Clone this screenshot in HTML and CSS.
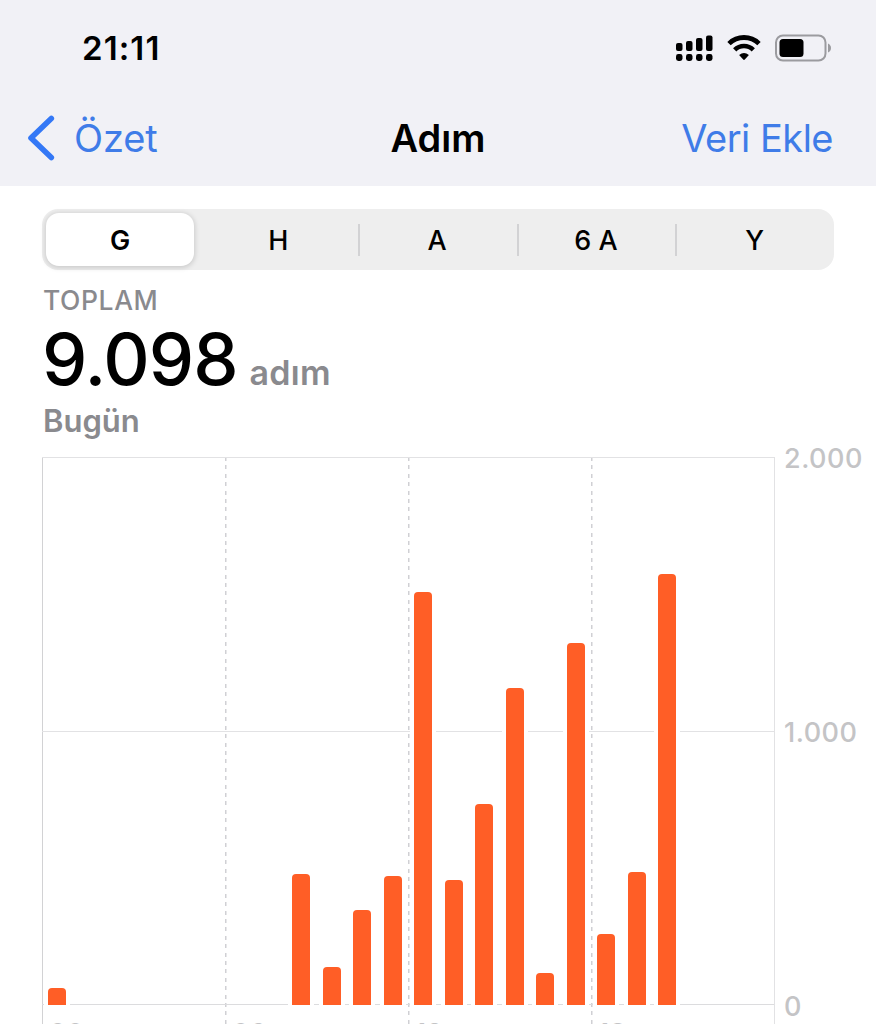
FILE: index.html
```html
<!DOCTYPE html>
<html lang="tr">
<head>
  <meta charset="UTF-8">
  <meta name="viewport" content="width=device-width, initial-scale=1.0">
  <title>Adım</title>
  <link rel="stylesheet" href="styles.css">
</head>
<body>
  <header>
    <div class="status-bar">
      <span class="clock">21:11</span>
      <div class="status-icons">
        <svg class="signal" width="38" height="28" viewBox="0 0 38 28">
          <rect x="1" y="9" width="6.5" height="8" rx="2"/>
          <rect x="11" y="7" width="6.5" height="10" rx="2"/>
          <rect x="21" y="4" width="6.5" height="13" rx="2"/>
          <rect x="31" y="1.5" width="6.5" height="15.5" rx="2"/>
          <rect x="1" y="20" width="6.5" height="7" rx="2.4"/>
          <rect x="11" y="20" width="6.5" height="7" rx="2.4"/>
          <rect x="21" y="20" width="6.5" height="7" rx="2.4"/>
          <rect x="31" y="20" width="6.5" height="7" rx="2.4"/>
        </svg>
        <svg class="wifi" width="34" height="26" viewBox="0 0 34 26">
          <path d="M2 8.6 A 21.5 21.5 0 0 1 32 8.6" fill="none" stroke="#000" stroke-width="4.8"/>
          <path d="M7.7 14.8 A 13.2 13.2 0 0 1 26.3 14.8" fill="none" stroke="#000" stroke-width="4.6"/>
          <path d="M12.1 20.1 Q17 16 21.9 20.1 L17.8 24.6 Q17 25.3 16.2 24.6 Z"/>
        </svg>
        <svg class="battery" width="57" height="28" viewBox="0 0 57 28">
          <rect x="1" y="1.5" width="49.5" height="25" rx="7" fill="none" stroke="#9b9b9f" stroke-width="2"/>
          <rect x="4.5" y="5" width="24" height="18" rx="3.5"/>
          <path d="M53 9.5 Q56 11 56 14 Q56 17 53 18.5 Z" fill="#9b9b9f"/>
        </svg>
      </div>
    </div>
    <nav>
      <a class="back">
        <svg width="28" height="46" viewBox="0 0 28 46">
          <path d="M24.3 3.5 L4 23 L24.3 42.5" fill="none" stroke="#3478f6" stroke-width="5.6" stroke-linecap="round" stroke-linejoin="round"/>
        </svg>
        <span>Özet</span>
      </a>
      <h1>Adım</h1>
      <a class="add">Veri Ekle</a>
    </nav>
  </header>

  <main>
    <div class="tabs">
      <div class="tab active">G</div>
      <div class="tab">H</div>
      <div class="tab line">A</div>
      <div class="tab line">6 A</div>
      <div class="tab line">Y</div>
    </div>

    <div class="summary">
      <div class="label">TOPLAM</div>
      <div class="total"><span class="value">9.098</span><span class="unit">adım</span></div>
      <div class="date">Bugün</div>
    </div>

    <div class="chart">
      <div class="plot" id="plot"></div>
      <div class="y-axis">
        <span>2.000</span>
        <span>1.000</span>
        <span>0</span>
      </div>
    </div>
  </main>

  <script>
    // steps for each hour of the day
    const steps = [
      62, 0, 0, 0, 0, 0,
      0, 0, 479, 139, 345, 471,
      1507, 457, 735, 1157, 117, 1320,
      260, 485, 1573, 0, 0, 0
    ];
    const max = 2000;
    const plot = document.getElementById('plot');

    for (let q = 0; q < 4; q++) {
      const quarter = document.createElement('div');
      quarter.className = 'quarter';
      const bars = steps.slice(q * 6, q * 6 + 6).map(n =>
        `<div class="hour">${n ? `<div class="bar" style="height:${n / max * 100}%"></div>` : ''}</div>`
      ).join('');
      quarter.innerHTML = `
        <div class="bars">${bars}</div>
        <div class="time">${String(q * 6).padStart(2, '0')}</div>
      `;
      plot.appendChild(quarter);
    }
  </script>
</body>
</html>
```

FILE: styles.css
```css
* {
  box-sizing: border-box;
}
body {
  font-family: Inter, "Liberation Sans", sans-serif;
  background: #fff;
  color: #000;
  margin: 0;
  height: 1024px;
  overflow: hidden;
}
header {
  background: #f1f1f6;
  height: 186px;
}
.status-bar {
  display: flex;
  justify-content: space-between;
  align-items: center;
  height: 95px;
  padding: 0 44px 0 82px;
}
.clock {
  font-size: 33px;
  font-weight: 600;
  letter-spacing: 1.1px;
}
.status-icons {
  display: flex;
  align-items: center;
  gap: 14px;
}
nav {
  display: grid;
  grid-template-columns: 1fr auto 1fr;
  align-items: center;
  height: 86px;
  padding: 0 43px 0 27px;
}
nav a {
  color: #3f7ce8;
  font-size: 38px;
  letter-spacing: -0.1px;
}
.back {
  display: flex;
  align-items: center;
  gap: 19px;
}
nav .add {
  text-align: right;
  letter-spacing: -0.5px;
}
h1 {
  font-size: 38px;
  font-weight: 600;
  margin: 0 -8px 0 8px;
}
main {
  padding: 23px 0 0 42px;
}
.tabs {
  display: flex;
  width: 792px;
  height: 61px;
  padding: 4px 0;
  border-radius: 16px;
  background: #eee;
}
.tab {
  flex: 1;
  display: flex;
  align-items: center;
  justify-content: center;
  font-size: 27px;
  font-weight: 500;
  padding-top: 2px;
}
.tab.active {
  flex: none;
  width: 148px;
  margin: 0 5px 0 4px;
  border-radius: 13px;
  background: #fff;
  font-weight: 600;
  box-shadow: 0 1px 5px 1px rgba(0,0,0,0.15);
}
.tab.line {
  background: linear-gradient(#d2d2d4, #d2d2d4) left center / 2px 32px no-repeat;
}
.summary {
  color: #8a8a8e;
  font-weight: 600;
  height: 187px;
  padding: 14px 0 0 1px;
}
.label {
  font-size: 26.5px;
  line-height: 32px;
  font-weight: 500;
  letter-spacing: 0.6px;
}
.total {
  display: flex;
  align-items: baseline;
  gap: 12px;
  height: 85px;
  line-height: 85px;
}
.value {
  color: #000;
  font-size: 72px;
  font-weight: 500;
  letter-spacing: -1px;
  margin-left: -1px;
}
.unit {
  font-size: 34px;
  letter-spacing: 0.3px;
}
.date {
  font-size: 31px;
  line-height: 40px;
}
.chart {
  display: flex;
  gap: 9px;
}
.plot {
  display: flex;
  width: 733px;
  height: 600px;
  border-left: 1px solid #d2d2d4;
  border-right: 1px solid #e2e2e4;
}
.quarter {
  flex: 1;
  margin-left: -1px;
  margin-right: 1px;
}
.quarter + .quarter {
  background: repeating-linear-gradient(#d0d0d4 0 4px, transparent 4px 8.4px) left top / 1.5px 100% no-repeat;
}
.quarter:last-child {
  margin-right: 0;
}
.bars {
  display: flex;
  align-items: flex-end;
  height: 548px;
  background:
    linear-gradient(#e2e2e4, #e2e2e4) 0 0 / 100% 1px no-repeat,
    linear-gradient(#e2e2e4, #e2e2e4) 0 50% / 100% 1px no-repeat,
    linear-gradient(#dcdcde, #dcdcde) 0 100% / 100% 1px no-repeat;
}
.hour {
  flex: 1;
  display: flex;
  align-items: flex-end;
  justify-content: center;
  height: 100%;
}
.bar {
  width: 18px;
  border-radius: 4px 4px 0 0;
  background: #ff5e26;
  box-shadow: 0 0 0 4px #fff;
}
.time {
  color: #c4c4c6;
  font-size: 27px;
  font-weight: 500;
  line-height: 32px;
  padding: 13px 0 0 7px;
}
.y-axis {
  display: flex;
  flex-direction: column;
  justify-content: space-between;
  height: 580px;
  margin-top: -14px;
  color: #c4c4c6;
  font-size: 27px;
  font-weight: 500;
  line-height: 32px;
  letter-spacing: 0.5px;
}
```
